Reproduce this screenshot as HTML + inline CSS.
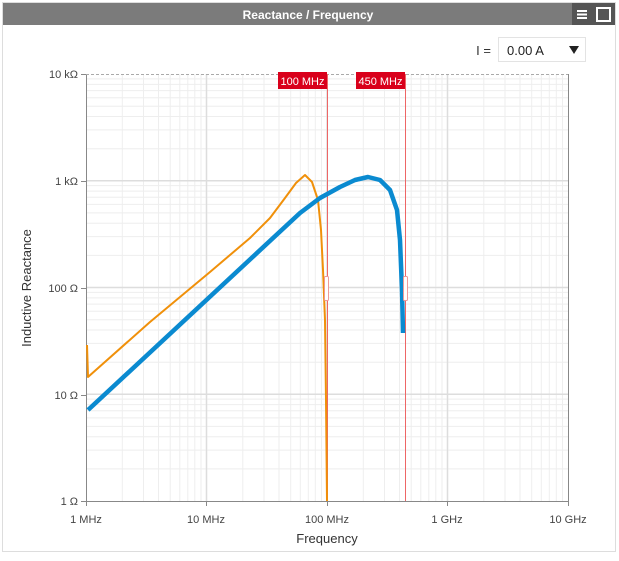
<!DOCTYPE html>
<html><head><style>
body{margin:0;width:619px;height:556px;background:#fff;font-family:"Liberation Sans",sans-serif;overflow:hidden}
</style></head><body>
<svg width="619" height="556" viewBox="0 0 619 556" xmlns="http://www.w3.org/2000/svg" font-family="Liberation Sans, sans-serif">
<rect x="2.5" y="2.5" width="613" height="549" fill="#fff" stroke="#ddd"/>
<rect x="3" y="3" width="612" height="22" fill="#7b7b7b"/>
<rect x="572" y="3" width="43" height="22" fill="#555"/>
<text x="308" y="19" text-anchor="middle" fill="#fff" font-size="12" font-weight="bold">Reactance / Frequency</text>
<g fill="#fff"><rect x="577" y="10" width="10" height="2"/><rect x="577" y="13.5" width="10" height="2"/><rect x="577" y="17" width="10" height="2"/></g>
<rect x="597" y="8" width="13" height="13" fill="none" stroke="#fff" stroke-width="2"/>
<text x="491" y="55" text-anchor="end" fill="#333" font-size="13">I =</text>
<rect x="498.5" y="37.5" width="87" height="24" fill="#fff" stroke="#e3e3e3"/>
<text x="507" y="55" fill="#222" font-size="13">0.00 A</text>
<path d="M569 46h10l-5 8z" fill="#222"/>
<path stroke="#eee" stroke-width="1" fill="none" d="
M122.3 74V501M143.5 74V501M158.5 74V501M170.2 74V501M179.8 74V501M187.8 74V501M194.8 74V501M201 74V501
M242.8 74V501M264 74V501M279 74V501M290.7 74V501M300.3 74V501M308.3 74V501M315.3 74V501M321.5 74V501
M363.3 74V501M384.5 74V501M399.5 74V501M411.2 74V501M420.8 74V501M428.8 74V501M435.8 74V501M442 74V501
M483.8 74V501M505 74V501M520 74V501M531.7 74V501M541.3 74V501M549.3 74V501M556.3 74V501M562.5 74V501
M86 468.9H568M86 450.1H568M86 436.7H568M86 426.4H568M86 417.9H568M86 410.8H568M86 404.6H568M86 399.1H568
M86 362.2H568M86 343.4H568M86 330H568M86 319.7H568M86 311.2H568M86 304.1H568M86 297.9H568M86 292.4H568
M86 255.4H568M86 236.6H568M86 223.2H568M86 212.9H568M86 204.4H568M86 197.3H568M86 191.1H568M86 185.6H568
M86 148.7H568M86 129.9H568M86 116.5H568M86 106.2H568M86 97.7H568M86 90.6H568M86 84.4H568M86 78.9H568"/>
<path stroke="#ddd" stroke-width="1.5" fill="none" d="M206.5 74V501M327 74V501M447.5 74V501M86 394.25H568M86 287.5H568M86 180.75H568"/>
<g stroke="#888" stroke-width="1" fill="none"><path d="M86.5 74v427.5H568.5V74"/><path d="M86 74.5H568" stroke="#aaa" stroke-dasharray="3 2"/></g>
<g font-size="11" fill="#444" text-anchor="end">
<text x="78" y="78">10 kΩ</text><text x="78" y="185">1 kΩ</text><text x="78" y="292">100 Ω</text><text x="78" y="399">10 Ω</text><text x="78" y="505">1 Ω</text></g>
<g font-size="11" fill="#444" text-anchor="middle">
<text x="86" y="523">1 MHz</text><text x="206" y="523">10 MHz</text><text x="327" y="523">100 MHz</text><text x="447" y="523">1 GHz</text><text x="568" y="523">10 GHz</text></g>
<text x="327" y="543" text-anchor="middle" font-size="13" fill="#333">Frequency</text>
<text transform="translate(31 288) rotate(-90)" text-anchor="middle" font-size="13" fill="#333">Inductive Reactance</text>
<g stroke="#e66" stroke-width="1"><line x1="327.5" y1="74" x2="327.5" y2="501"/><line x1="405.5" y1="74" x2="405.5" y2="501"/></g>
<rect x="278" y="72" width="49" height="17" fill="#d9001b"/><text x="302.5" y="85" text-anchor="middle" fill="#fff" font-size="11">100 MHz</text>
<rect x="356" y="72" width="49" height="17" fill="#d9001b"/><text x="380.5" y="85" text-anchor="middle" fill="#fff" font-size="11">450 MHz</text>
<path d="M87 345L88 377L150 322L210 272L250 238L270 218L285 198L296 183L305 175L312 182L318 200L321 230L323 270L325 320L326 400L327 501" fill="none" stroke="#f0900a" stroke-width="2" stroke-linejoin="round"/>
<path d="M88 410L300 213L320 198L340 187L355 180L368 177L380 180L390 190L397 210L400 240L402 290L403 333" fill="none" stroke="#0a8ad0" stroke-width="4.5" stroke-linejoin="round"/>
<g fill="#fff" stroke="#e99"><rect x="324.5" y="276.5" width="4" height="24" rx="1"/><rect x="403.5" y="276.5" width="4" height="24" rx="1"/></g>
<g stroke="#888"><line x1="81" y1="74.5" x2="86" y2="74.5"/><line x1="81" y1="181.5" x2="86" y2="181.5"/><line x1="81" y1="288.5" x2="86" y2="288.5"/><line x1="81" y1="395.5" x2="86" y2="395.5"/><line x1="81" y1="501.5" x2="86" y2="501.5"/>
<line x1="86.5" y1="501" x2="86.5" y2="506"/><line x1="206.5" y1="501" x2="206.5" y2="506"/><line x1="327.5" y1="501" x2="327.5" y2="506"/><line x1="447.5" y1="501" x2="447.5" y2="506"/><line x1="568.5" y1="501" x2="568.5" y2="506"/></g>
</svg>
</body></html>
